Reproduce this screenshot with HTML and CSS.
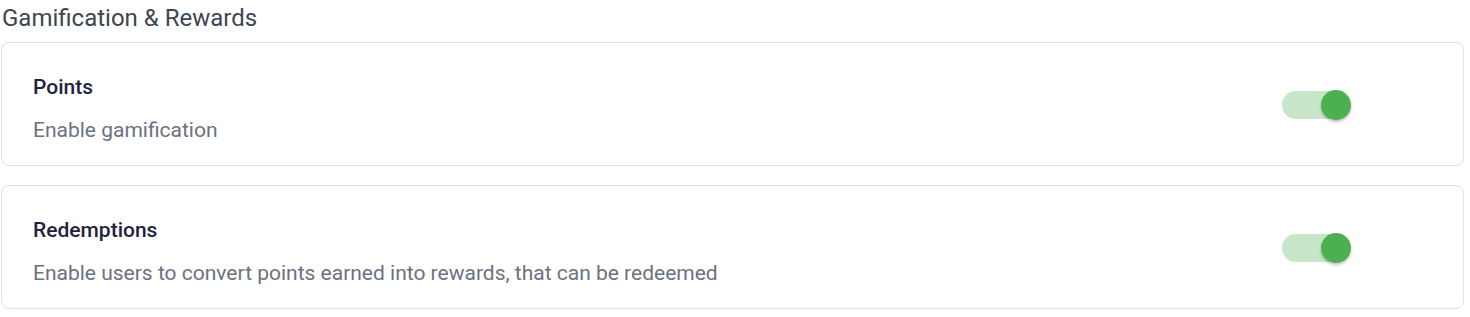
FILE: index.html
```html
<!DOCTYPE html>
<html lang="en">
  <head>
    <meta charset="UTF-8" />
    <title>Gamification &amp; Rewards</title>
    <link rel="stylesheet" href="styles.css">
  </head>
  <body>
    <div class="section">
      <h2>Gamification &amp; Rewards</h2>
      <div class="card">
        <div class="card-text">
          <h3>Points</h3>
          <p>Enable gamification</p>
        </div>
        <label class="switch">
          <input type="checkbox" checked />
          <span class="track"></span>
          <span class="thumb"></span>
        </label>
      </div>
      <div class="card">
        <div class="card-text">
          <h3>Redemptions</h3>
          <p>Enable users to convert points earned into rewards, that can be redeemed</p>
        </div>
        <label class="switch">
          <input type="checkbox" checked />
          <span class="track"></span>
          <span class="thumb"></span>
        </label>
      </div>
    </div>
  </body>
</html>
```

FILE: styles.css
```css
body {
  margin: 0;
  font-family: Roboto, "Liberation Sans", sans-serif;
  background-color: #fff;
}

.section {
  width: 1463px;
  padding-left: 1px;
}

h2 {
  margin: 0;
  padding: 4px 0 0 1px;
  font-size: 24px;
  line-height: 28px;
  font-weight: 400;
  color: #3d4651;
  height: 38px;
}

.card {
  display: flex;
  justify-content: space-between;
  align-items: center;
  border: 1px solid #e0e0e6;
  border-radius: 8px;
  padding: 30px 112px 21px 31px;
  margin-bottom: 19px;
}

h3 {
  margin: 0;
  font-size: 21px;
  line-height: 28px;
  font-weight: 500;
  color: #1f2340;
}

p {
  margin: 15px 0 0;
  font-size: 21px;
  line-height: 28px;
  color: #6b7280;
}

.switch {
  position: relative;
  width: 69px;
  height: 30px;
  margin-bottom: 7px;
  cursor: pointer;
}

.switch input {
  display: none;
}

.track {
  position: absolute;
  left: 0;
  top: 1px;
  width: 64px;
  height: 28px;
  border-radius: 14px;
  background-color: #c8e6c9;
}

.thumb {
  position: absolute;
  left: 39px;
  top: 0;
  width: 30px;
  height: 30px;
  border-radius: 50%;
  background-color: #4caf50;
  box-shadow: 0 2px 3px rgba(0, 0, 0, 0.25);
}
```
